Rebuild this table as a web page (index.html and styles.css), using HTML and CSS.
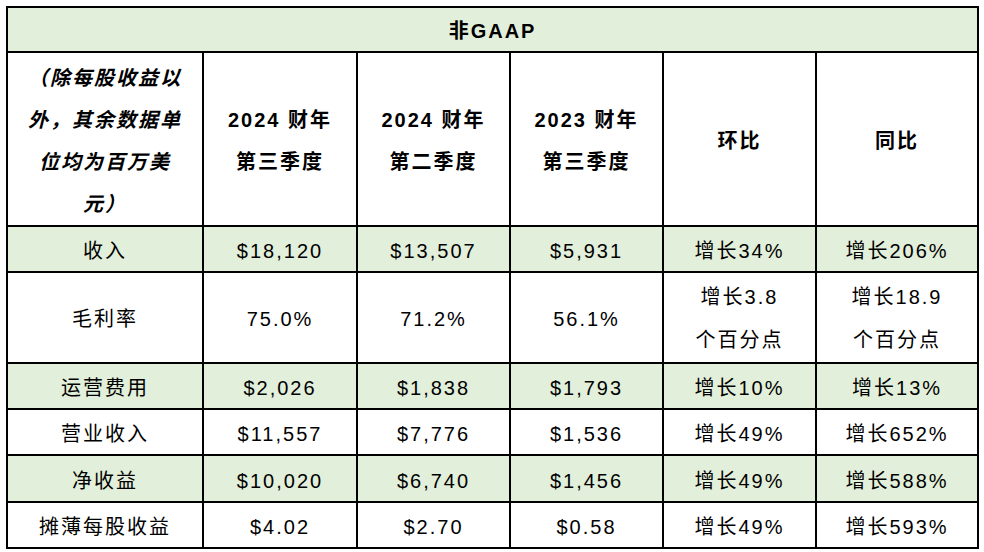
FILE: index.html
```html
<!DOCTYPE html>
<html lang="zh-CN">
<head>
<meta charset="utf-8">
<title>非GAAP</title>
<link rel="stylesheet" href="styles.css">
</head>
<body>
<table class="fin">
  <colgroup>
    <col class="c1"><col class="c2"><col class="c3"><col class="c4"><col class="c5"><col class="c6">
  </colgroup>
  <tr class="title green">
    <td colspan="6" class="bold">非GAAP</td>
  </tr>
  <tr class="head">
    <td class="bold italic">（除每股收益以<br>外，其余数据单<br>位均为百万美<br>元）</td>
    <td class="bold">2024 财年<br>第三季度</td>
    <td class="bold">2024 财年<br>第二季度</td>
    <td class="bold">2023 财年<br>第三季度</td>
    <td class="bold">环比</td>
    <td class="bold">同比</td>
  </tr>
  <tr class="row green">
    <td>收入</td><td>$18,120</td><td>$13,507</td><td>$5,931</td><td>增长34%</td><td>增长206%</td>
  </tr>
  <tr class="row tall">
    <td>毛利率</td><td>75.0%</td><td>71.2%</td><td>56.1%</td><td>增长3.8<br>个百分点</td><td>增长18.9<br>个百分点</td>
  </tr>
  <tr class="row green">
    <td>运营费用</td><td>$2,026</td><td>$1,838</td><td>$1,793</td><td>增长10%</td><td>增长13%</td>
  </tr>
  <tr class="row">
    <td>营业收入</td><td>$11,557</td><td>$7,776</td><td>$1,536</td><td>增长49%</td><td>增长652%</td>
  </tr>
  <tr class="row green r47">
    <td>净收益</td><td>$10,020</td><td>$6,740</td><td>$1,456</td><td>增长49%</td><td>增长588%</td>
  </tr>
  <tr class="row">
    <td>摊薄每股收益</td><td>$4.02</td><td>$2.70</td><td>$0.58</td><td>增长49%</td><td>增长593%</td>
  </tr>
</table>
</body>
</html>
```
FILE: styles.css
```css
html, body {
  margin: 0;
  padding: 0;
  background: #ffffff;
}
body {
  padding: 6px 0 0 6px;
  font-family: "Liberation Sans", "Noto Sans CJK SC", sans-serif;
  color: #000;
}
.fin {
  border-collapse: separate;
  border-spacing: 0;
  table-layout: fixed;
  width: 973px;
  border-left: 2px solid #000;
  border-top: 2px solid #000;
}
.c1 { width: 196px; }
.c2 { width: 154px; }
.c3 { width: 153px; }
.c4 { width: 153px; }
.c5 { width: 153px; }
.c6 { width: 162px; }
.fin td {
  box-sizing: border-box;
  border-right: 2px solid #000;
  border-bottom: 2px solid #000;
  padding: 4px 0 0 0;
  text-align: center;
  vertical-align: middle;
  font-size: 20px;
  line-height: 40px;
  letter-spacing: 2px;
  white-space: nowrap;
}
.green td { background: #e2efda; }
.title td { height: 45px; padding-top: 2px; }
.head td { height: 174px; line-height: 42px; padding-top: 4px; }
.row td { height: 46px; }
.row.tall td { height: 91px; line-height: 43px; padding-top: 3px; }
.row.r47 td { height: 47px; }
.bold { font-weight: 700; letter-spacing: 1px; }
.italic { font-style: italic; }
```
